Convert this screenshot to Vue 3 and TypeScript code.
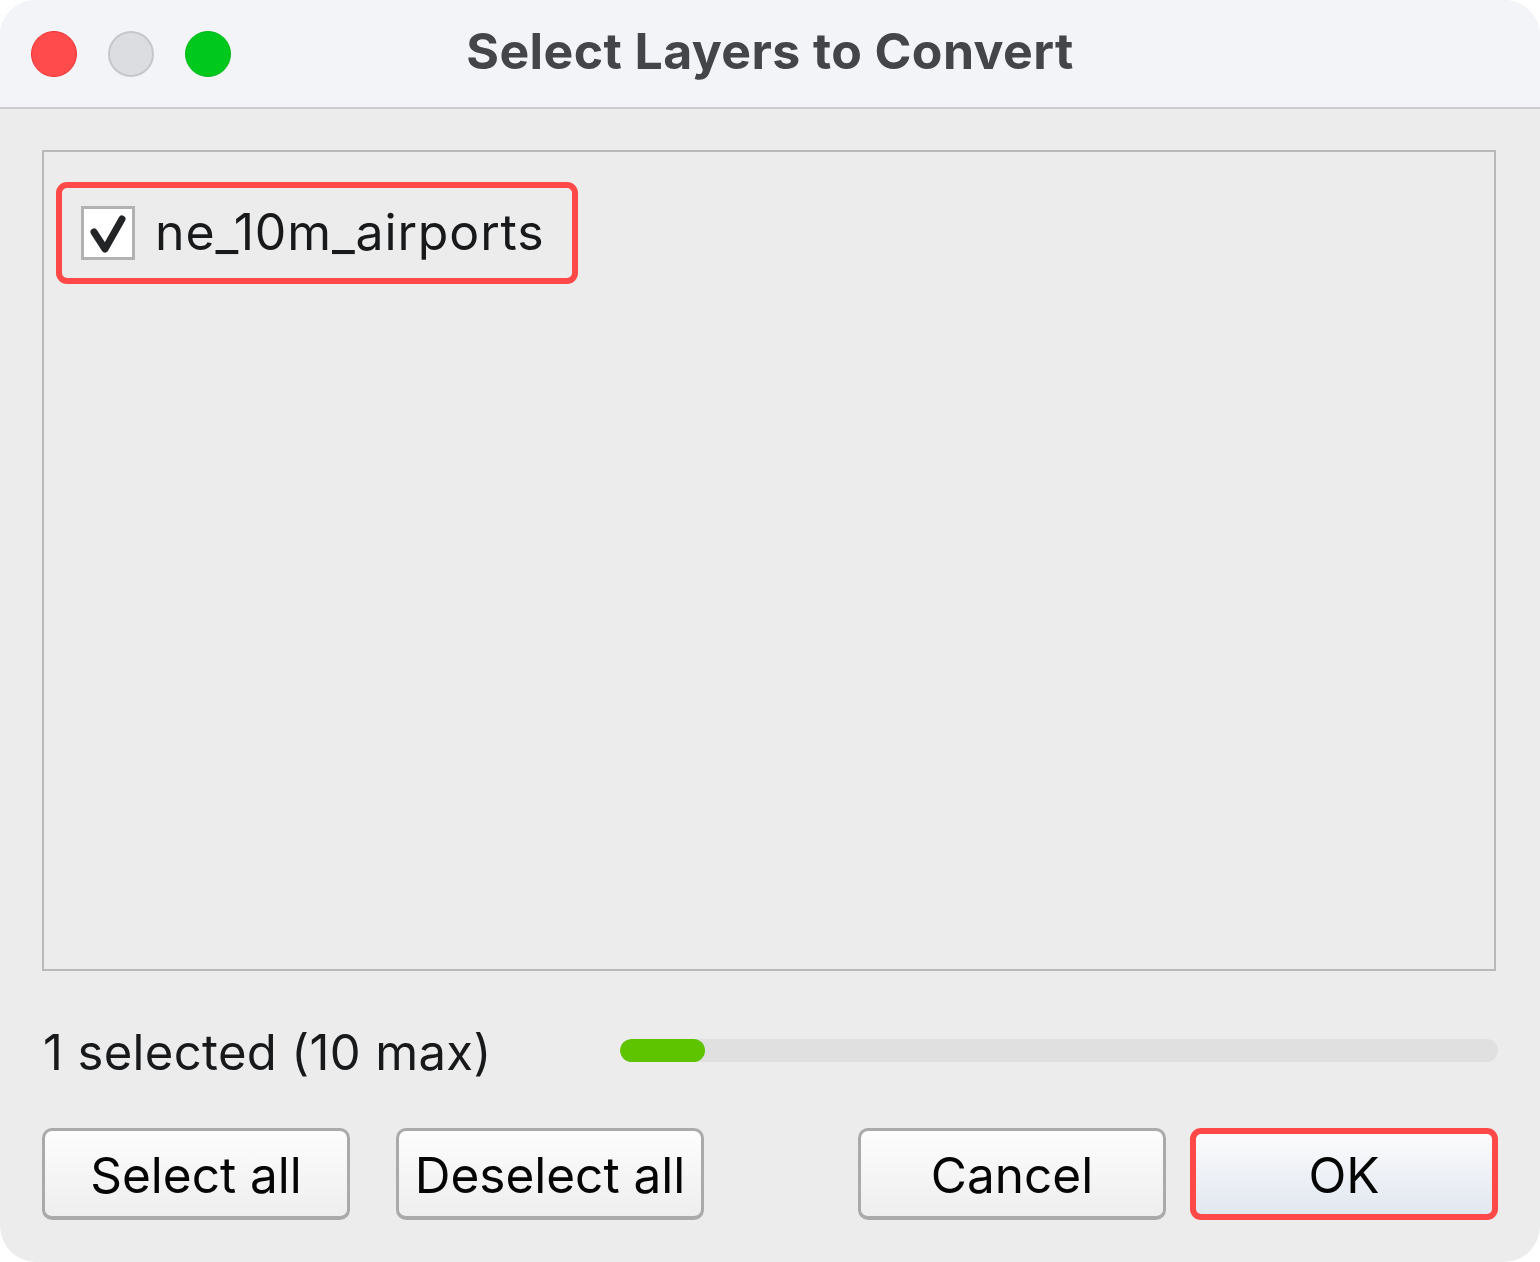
<template>
  <div class="win">
    <div class="titlebar">
      <div class="lights">
        <span class="light red"></span>
        <span class="light grey"></span>
        <span class="light green"></span>
      </div>
      <div class="title">{{ title }}</div>
      <div></div>
    </div>
    <div class="content">
      <div class="list">
        <div class="item">
          <span class="check">
            <svg width="40" height="44" viewBox="0 0 40 44">
              <path d="M6 21 L17 38 L34 8" fill="none" stroke="#222426" stroke-width="7" stroke-linecap="round" stroke-linejoin="round" />
            </svg>
          </span>
          <span class="item-name">{{ layer }}</span>
        </div>
      </div>
      <div class="status">
        <span class="status-text">{{ selected }} selected (10 max)</span>
        <div class="track">
          <div class="fill" :style="{ width: fillPct + '%' }"></div>
        </div>
      </div>
      <div class="actions">
        <div class="group">
          <button class="btn">Select all</button>
          <button class="btn">Deselect all</button>
        </div>
        <div class="group right">
          <button class="btn">Cancel</button>
          <button class="btn ok">OK</button>
        </div>
      </div>
    </div>
  </div>
</template>

<script setup lang="ts">
import { ref, computed } from 'vue'

const title = ref('Select Layers to Convert')
const layer = ref('ne_10m_airports')
const selected = ref(1)
const fillPct = computed(() => selected.value * 9.7)
</script>

<style>
html, body {
  background: #fff;
}
</style>

<style scoped>
.win {
  display: flex;
  flex-direction: column;
  width: 1540px;
  height: 1262px;
  border-radius: 36px;
  overflow: hidden;
  background: #ececec;
  font-family: Inter, "Liberation Sans", Arial, sans-serif;
}
.titlebar {
  display: grid;
  grid-template-columns: 1fr auto 1fr;
  align-items: center;
  flex: none;
  box-sizing: border-box;
  height: 109px;
  padding: 0 31px;
  background: #f2f4f8;
  border-bottom: 2px solid #cdcdcd;
}
.lights {
  display: flex;
  gap: 31px;
}
.light {
  box-sizing: border-box;
  width: 46px;
  height: 46px;
  border-radius: 50%;
}
.red {
  background: #ff4b4b;
  border: 1px solid #ee3030;
}
.grey {
  background: #dcdde0;
  border: 2px solid #c6c7c9;
}
.green {
  background: #00c81c;
  border: 1px solid #02b818;
}
.title {
  padding-bottom: 6px;
  font-size: 50px;
  font-weight: 700;
  letter-spacing: 0.4px;
  color: #434548;
}
.content {
  flex: 1;
  display: flex;
  flex-direction: column;
  padding: 41px 42px 42px;
}
.list {
  box-sizing: border-box;
  width: 1454px;
  height: 821px;
  padding: 30px 12px;
  border: 2px solid #b9b9b9;
}
.item {
  box-sizing: border-box;
  display: flex;
  align-items: center;
  gap: 20px;
  width: 522px;
  height: 102px;
  padding-left: 19px;
  border: 6px solid #ff4848;
  border-radius: 11px;
}
.check {
  box-sizing: border-box;
  display: flex;
  align-items: center;
  justify-content: center;
  width: 54px;
  height: 54px;
  background: #fff;
  border: 3px solid #b2b2b2;
}
.item-name {
  padding-bottom: 2px;
  font-size: 50px;
  letter-spacing: 0.85px;
  color: #17191b;
}
.status {
  display: flex;
  align-items: center;
  justify-content: space-between;
  height: 68px;
  margin-top: 47px;
}
.status-text {
  padding-left: 1px;
  font-size: 49px;
  letter-spacing: 0.35px;
  color: #17191b;
}
.track {
  width: 878px;
  height: 23px;
  margin-top: -3px;
  border-radius: 12px;
  background: #e0e0e0;
  overflow: hidden;
}
.fill {
  height: 100%;
  border-radius: 12px;
  background: #5ec400;
}
.actions {
  display: flex;
  justify-content: space-between;
  margin-top: 42px;
}
.group {
  display: flex;
  gap: 46px;
}
.group.right {
  gap: 24px;
}
.btn {
  box-sizing: border-box;
  width: 308px;
  height: 92px;
  padding: 2px 0 0;
  border: 3px solid #aaa;
  border-bottom-width: 4px;
  border-radius: 10px;
  background: linear-gradient(#fdfdfd, #eeeeee);
  font-family: inherit;
  font-size: 49.5px;
  color: #050505;
}
.btn.ok {
  border: 6px solid #ff4848;
  border-radius: 11px;
  background: linear-gradient(#fbfbfc, #e1e7f0);
}
</style>
